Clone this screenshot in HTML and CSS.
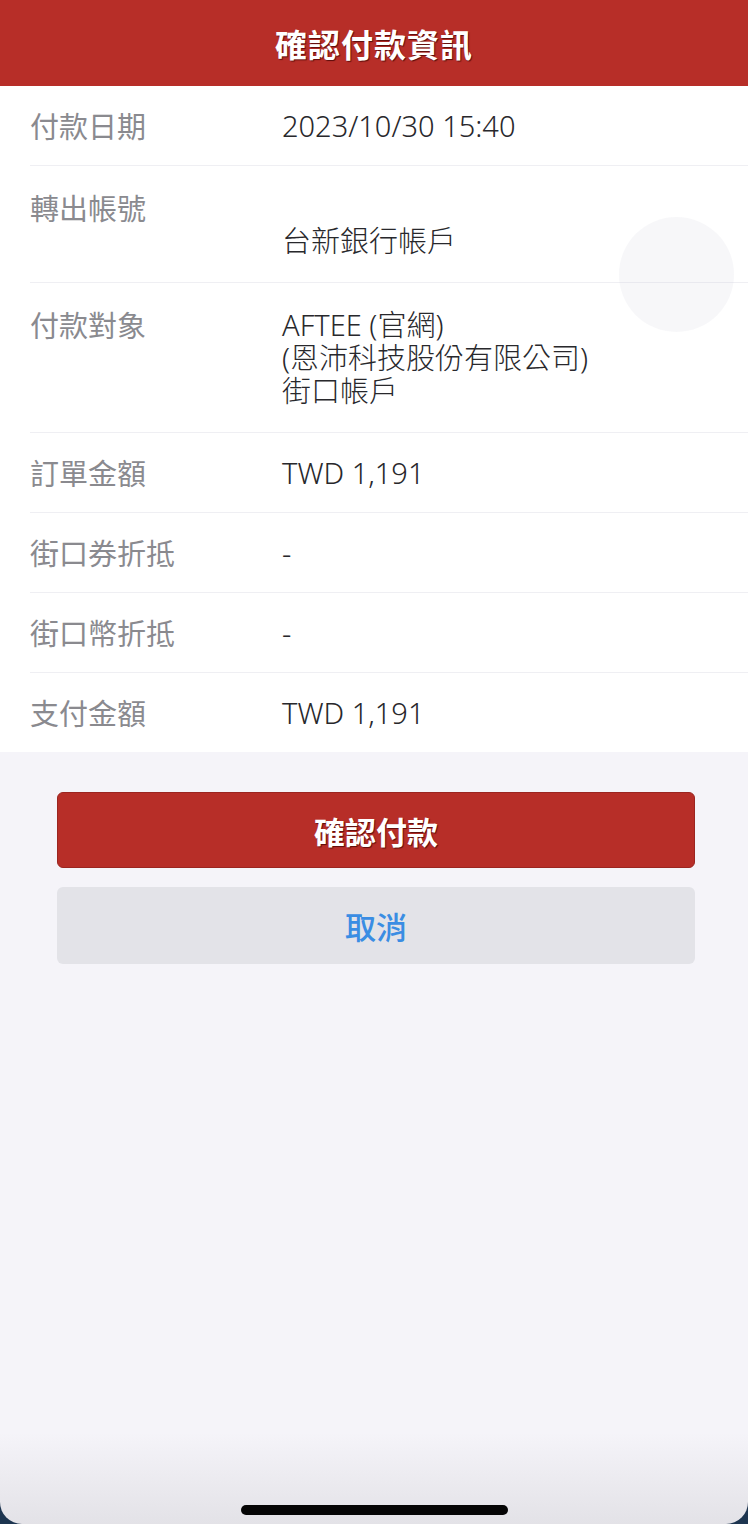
FILE: index.html
```html
<!DOCTYPE html>
<html>
<head>
    <meta charset="UTF-8">
    <title>確認付款資訊</title>
    <!-- Styling for the payment confirm screen -->
    <link rel="stylesheet" href="styles.css">
</head>
<body>
    <div class="screen">
        <header class="topbar">確認付款資訊</header>

        <!-- Payment details -->
        <div class="details">
            <div class="row">
                <div class="label">付款日期</div>
                <div class="value">2023/10/30 15:40</div>
            </div>
            <div class="row row-multi">
                <div class="label">轉出帳號</div>
                <div class="value">
                    <div class="line">&nbsp;</div>
                    <div class="line">台新銀行帳戶</div>
                </div>
            </div>
            <div class="row row-multi">
                <div class="label">付款對象</div>
                <div class="value">
                    <div class="line">AFTEE (官網)</div>
                    <div class="line">(恩沛科技股份有限公司)</div>
                    <div class="line">街口帳戶</div>
                </div>
            </div>
            <div class="row">
                <div class="label">訂單金額</div>
                <div class="value">TWD 1,191</div>
            </div>
            <div class="row">
                <div class="label">街口券折抵</div>
                <div class="value">-</div>
            </div>
            <div class="row">
                <div class="label">街口幣折抵</div>
                <div class="value">-</div>
            </div>
            <div class="row row-last">
                <div class="label">支付金額</div>
                <div class="value">TWD 1,191</div>
            </div>
        </div>

        <!-- Actions -->
        <div class="actions">
            <button type="button" class="btn btn-confirm">確認付款</button>
            <button type="button" class="btn btn-cancel">取消</button>
        </div>

        <div class="home-bar"></div>

        <!-- floating assistive touch circle -->
        <div class="float-circle"></div>
    </div>
</body>
</html>
```

FILE: styles.css
```css
html, body {
    margin: 0;
    padding: 0;
}
body {
    background-color: #1d3550;
    font-family: "Noto Sans", "Noto Sans CJK TC", sans-serif;
}
.screen {
    position: relative;
    width: 748px;
    height: 1524px;
    display: flex;
    flex-direction: column;
    background: linear-gradient(to bottom, #f5f4f9 0%, #f5f4f9 94%, #e3e2e7 100%);
    border-radius: 0 0 22px 22px;
    overflow: hidden;
}
.topbar {
    height: 86px;
    background-color: #b72e28;
    color: #FFFFFF;
    font-family: "Noto Sans CJK TC", sans-serif;
    font-size: 32px;
    font-weight: bold;
    line-height: 86px;
    text-align: center;
    text-shadow: 1px 1px 1px rgba(60, 0, 0, 0.75);
    letter-spacing: 1px;
}
.details {
    background-color: #FFFFFF;
}
.row {
    display: flex;
    margin-left: 30px;
    padding: 23px 0;
    border-bottom: 1px solid #efeff3;
    font-size: 29px;
    line-height: 33px;
}
.row-multi {
    padding: 25px 0;
}
.row-last {
    border-bottom: none;
}
.label {
    width: 252px;
    flex-shrink: 0;
    color: #8a8a8f;
    font-family: "Noto Sans CJK TC", sans-serif;
}
.value {
    color: #28282c;
    font-family: "Noto Sans", "Noto Sans CJK TC", sans-serif;
    font-weight: 300;
}
.line {
    height: 33px;
    white-space: nowrap;
}
.actions {
    display: flex;
    flex-direction: column;
    gap: 19px;
    padding: 40px 53px 0 57px;
}
.btn {
    height: 76px;
    border: none;
    border-radius: 6px;
    font-family: "Noto Sans CJK TC", sans-serif;
    font-size: 31px;
    cursor: pointer;
}
.btn-confirm {
    background-color: #b72e28;
    border: 1px solid #9b2520;
    color: #FFFFFF;
    font-weight: bold;
    text-shadow: 1px 1px 1px rgba(60, 0, 0, 0.75);
}
.btn-cancel {
    height: 77px;
    background-color: #e3e3e8;
    color: #3a8de3;
    font-weight: 500;
}
.home-bar {
    margin-top: auto;
    margin-bottom: 9px;
    align-self: center;
    width: 267px;
    height: 10px;
    border-radius: 5px;
    background-color: #050505;
}
.float-circle {
    position: absolute;
    left: 619px;
    top: 217px;
    width: 115px;
    height: 115px;
    border-radius: 50%;
    background-color: rgba(205, 203, 220, 0.16);
}
```
